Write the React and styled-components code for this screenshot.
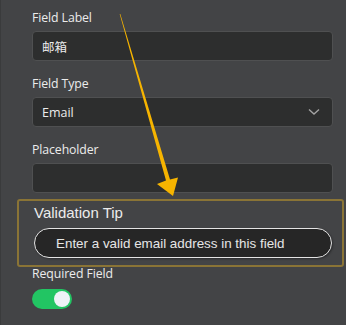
import React from "react";
import styled, { createGlobalStyle } from "styled-components";

const GlobalStyle = createGlobalStyle`
   html, body {
      margin: 0;
      padding: 0;
      background: #434446;
   }
`;

const Page = styled.div`
   position: relative;
   width: 346px;
   height: 325px;
   box-sizing: border-box;
   overflow: hidden;
   background: #434446;
   border-left: 1px solid #3a3b3c;
   padding: 11px 13px 0 31px;
   font-family: "Open Sans", "Noto Sans", sans-serif;
`;

const Field = styled.div`
   display: flex;
   flex-direction: column;
   gap: 6px;
   margin-bottom: ${(p) => p.$gap ?? 16}px;
`;

const Label = styled.label`
   font-size: 12.3px;
   line-height: 14px;
   color: #ececec;
   letter-spacing: -0.1px;
`;

const Input = styled.div`
   height: 30px;
   box-sizing: border-box;
   border: 1px solid #4f5051;
   border-radius: 4px;
   background: #2d2e2e;
   color: #ececec;
   font-size: 12.5px;
   font-family: "Open Sans", "Noto Sans CJK SC", sans-serif;
   display: flex;
   align-items: center;
   justify-content: space-between;
   padding: 0 12px 0 9px;
`;

const Chevron = () => (
   <svg width='12' height='8' viewBox='0 0 12 8'>
      <path d='M1 1.5 L6 6 L11 1.5' fill='none' stroke='#a3a3a3' strokeWidth='1.4' />
   </svg>
);

const TipBox = styled.div`
   margin: 6px -11px 0 -15px;
   border: 2px solid #8a7436;
   border-radius: 3px;
   padding: 3px 10px 7px 15px;
   font-family: "Liberation Sans", Arial, sans-serif;
`;

const TipTitle = styled.div`
   font-size: 15px;
   line-height: 18px;
   color: #ececec;
`;

const Pill = styled.div`
   margin-top: 6px;
   height: 30px;
   box-sizing: border-box;
   border: 1px solid #e4e4e4;
   border-radius: 15px;
   background: #262626;
   color: #e6e6e6;
   font-size: 13.4px;
   display: flex;
   align-items: center;
   padding-left: 21px;
   box-shadow: 1px 1px 2px rgba(0, 0, 0, 0.35);
`;

const RequiredRow = styled.div`
   display: flex;
   flex-direction: column;
   gap: 8px;
`;

const Toggle = styled.div`
   width: 40px;
   height: 20px;
   border-radius: 10px;
   background: ${(p) => (p.$on ? "#22c563" : "#666")};
   display: flex;
   align-items: center;
   justify-content: ${(p) => (p.$on ? "flex-end" : "flex-start")};
   padding: 0 2px;
   box-sizing: border-box;
`;

const Knob = styled.div`
   width: 16px;
   height: 16px;
   border-radius: 50%;
   background: #eef2f7;
`;

const Arrow = styled.svg`
   position: absolute;
   left: 0;
   top: 0;
   pointer-events: none;
`;

export default function App() {
   return (
      <>
         <GlobalStyle />
         <Page>
            <Field>
               <Label>Field Label</Label>
               <Input>邮箱</Input>
            </Field>
            <Field>
               <Label>Field Type</Label>
               <Input>
                  Email
                  <Chevron />
               </Input>
            </Field>
            <Field $gap={0}>
               <Label>Placeholder</Label>
               <Input />
            </Field>
            <TipBox>
               <TipTitle>Validation Tip</TipTitle>
               <Pill>Enter a valid email address in this field</Pill>
            </TipBox>
            <RequiredRow>
               <Label>Required Field</Label>
               <Toggle $on>
                  <Knob />
               </Toggle>
            </RequiredRow>
            <Arrow width='346' height='325' viewBox='0 0 346 325'>
               <polygon
                  points='118.7,14.1 119.3,13.9 169,179.4 177,177.5 172,196 156,184 165,180.6'
                  fill='#f6b400'
               />
            </Arrow>
         </Page>
      </>
   );
}
